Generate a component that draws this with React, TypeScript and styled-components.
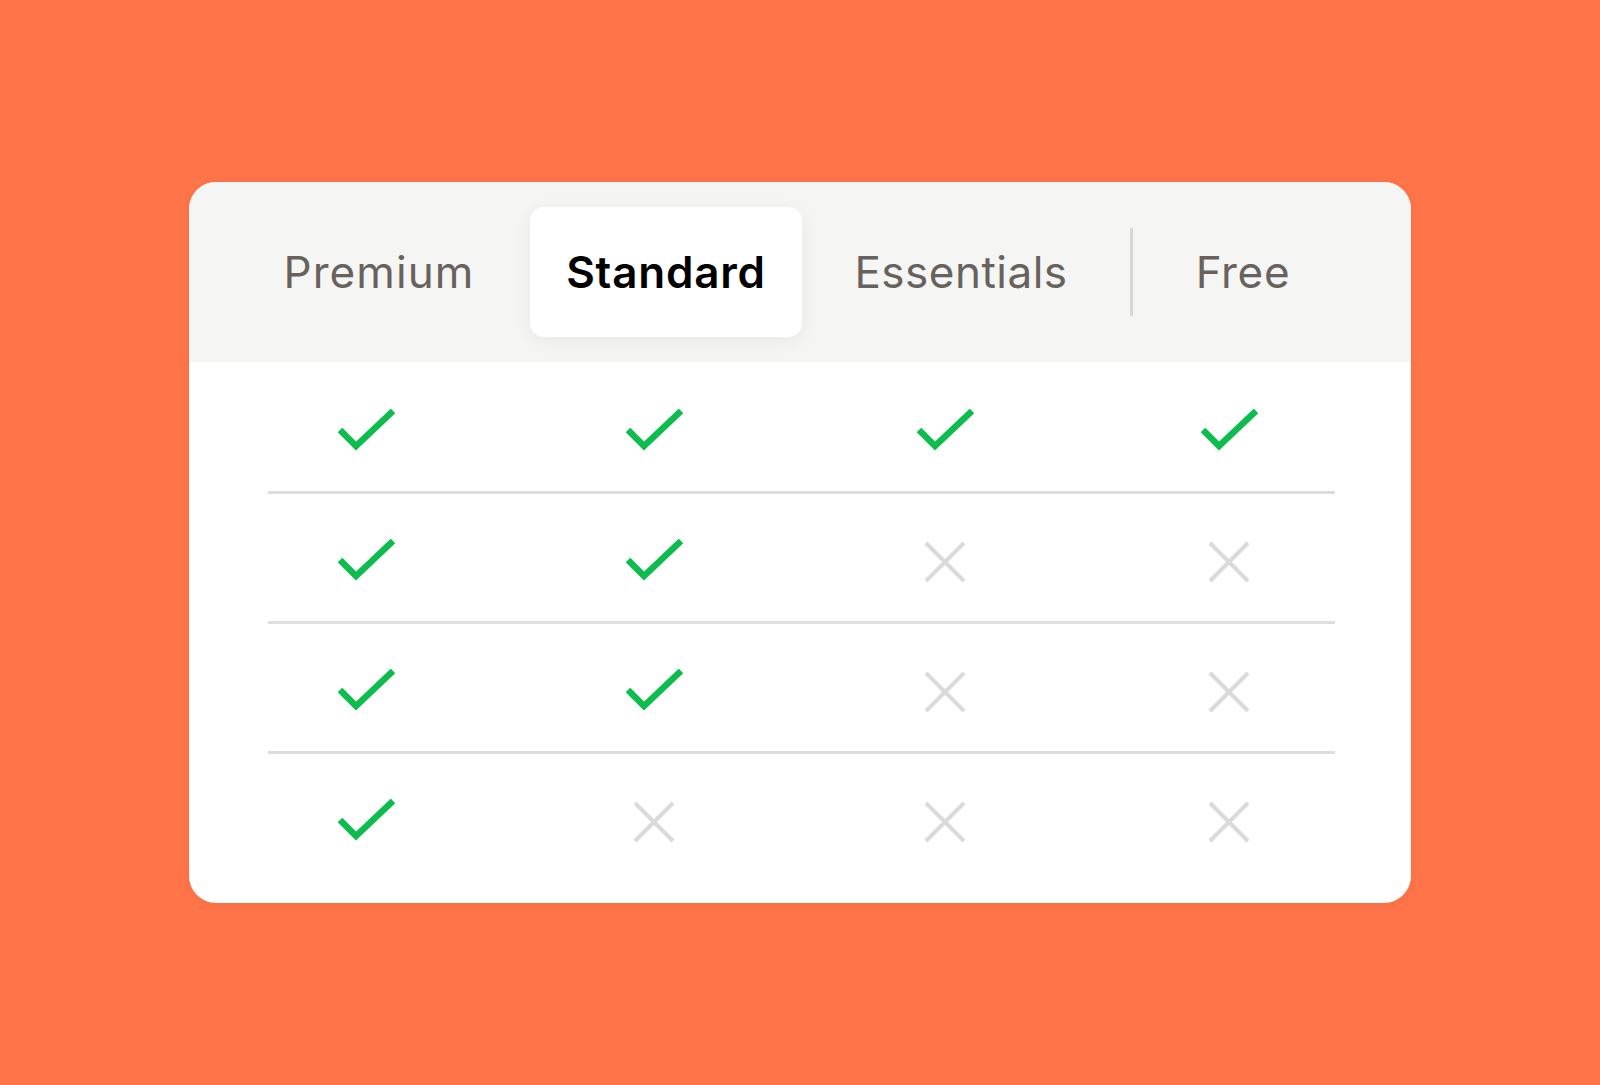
import React from "react";
import styled, { createGlobalStyle } from "styled-components";

const Global = createGlobalStyle`
  html, body { margin: 0; padding: 0; }
  body { font-family: Inter, "Noto Sans", sans-serif; }
`;

const Page = styled.div`
  width: 1600px;
  height: 1085px;
  background: #ff7549;
  display: flex;
  align-items: center;
  justify-content: center;
`;

const Card = styled.div`
  width: 1222px;
  height: 721px;
  background: #ffffff;
  border-radius: 27px;
  overflow: hidden;
  display: flex;
  flex-direction: column;
  box-shadow: 0 2px 10px rgba(120, 40, 10, 0.08);
`;

const Header = styled.div`
  height: 180px;
  flex: none;
  background: #f5f5f3;
  display: flex;
  align-items: center;
  padding-left: 54px;
  box-sizing: border-box;
`;

const Tab = styled.div<{ $w: number; $active?: boolean; $ml?: number; $ls?: number }>`
  width: ${(p) => p.$w}px;
  height: 130px;
  margin-left: ${(p) => p.$ml ?? 0}px;
  flex: none;
  display: flex;
  align-items: center;
  justify-content: center;
  border-radius: 14px;
  font-size: 44px;
  letter-spacing: ${(p) => p.$ls ?? 0.7}px;
  font-weight: ${(p) => (p.$active ? 600 : 400)};
  color: ${(p) => (p.$active ? "#000000" : "#67625d")};
  background: ${(p) => (p.$active ? "#ffffff" : "transparent")};
  box-shadow: ${(p) => (p.$active ? "0 4px 18px rgba(0,0,0,0.06)" : "none")};
`;

const VLine = styled.div`
  width: 3px;
  height: 88px;
  margin-left: 33px;
  background: #d8d6d3;
  flex: none;
`;

const Body = styled.div`
  display: flex;
  flex-direction: column;
  padding: 2px 0 19px;
`;

const Row = styled.div`
  height: 127px;
  box-sizing: border-box;
  padding: 8px 0 0 33px;
  display: grid;
  grid-template-columns: 288px 288px 294px 274px;
  align-items: center;
  justify-items: center;
`;

const Sep = styled.div`
  height: 3px;
  margin: 0 76px 0 79px;
  background: #dddddd;
`;

const Check = () => (
  <svg width="58" height="46" viewBox="0 0 58 46">
    <polyline
      points="3,21 19,37 56,2"
      fill="none"
      stroke="#0cbd4e"
      strokeWidth="6.5"
      strokeLinecap="butt"
      strokeLinejoin="miter"
    />
  </svg>
);

const Cross = () => (
  <svg width="44" height="44" viewBox="0 0 44 44">
    <path d="M3 3 L41 41 M41 3 L3 41" stroke="#dadada" strokeWidth="4" fill="none" />
  </svg>
);

const rows: boolean[][] = [
  [true, true, true, true],
  [true, true, false, false],
  [true, true, false, false],
  [true, false, false, false],
];

export default function App() {
  return (
    <>
      <Global />
      <Page>
        <Card>
          <Header>
            <Tab $w={272} $ls={1.1}>Premium</Tab>
            <Tab $w={272} $ml={15} $active $ls={0.8}>
              Standard
            </Tab>
            <Tab $w={272} $ml={23} $ls={0.5}>Essentials</Tab>
            <VLine />
            <Tab $w={220}>Free</Tab>
          </Header>
          <Body>
            {rows.map((r, i) => (
              <React.Fragment key={i}>
                {i > 0 && <Sep />}
                <Row>
                  {r.map((v, j) => (v ? <Check key={j} /> : <Cross key={j} />))}
                </Row>
              </React.Fragment>
            ))}
          </Body>
        </Card>
      </Page>
    </>
  );
}
